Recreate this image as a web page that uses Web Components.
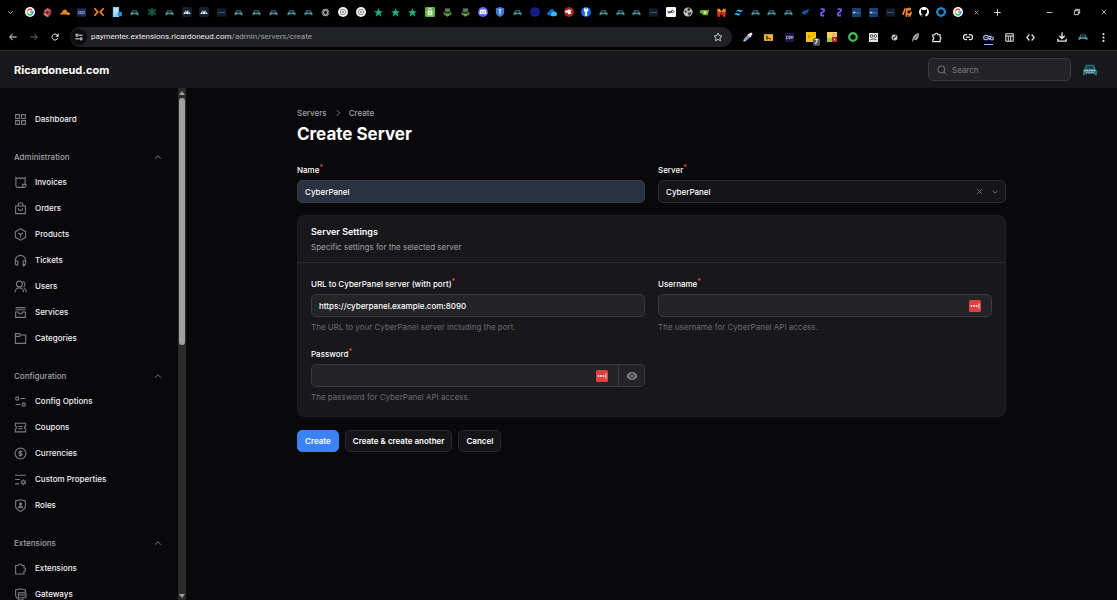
<!DOCTYPE html>
<html lang="en">
<head>
<meta charset="utf-8">
<meta name="viewport" content="width=device-width, initial-scale=1">
<title>Create Server - Ricardoneud.com</title>
<style>
  :root {
    --page: #09090b; --panel: #18181b; --line: #27272a;
    --text: #f4f4f5; --soft: #a1a1aa; --faint: #7c7c85; --danger: #f0524f; --accent: #3b82f6;
  }
  body { margin: 0; background: var(--page); color: var(--text);
    font: 500 8px/12px Inter, "Liberation Sans", sans-serif; }
</style>
</head>
<body>
<browser-window></browser-window>

<script>
const line = (d, w = 2) => `<g fill="none" stroke="currentColor" stroke-width="${w}">${d}</g>`;
const p = d => `<path d="${d}"/>`;
const G = '<circle cx="12" cy="12" r="12" fill="#fff"/><g fill="none" stroke-width="3.6"><path d="M17 7.2A7 7 0 0 0 6 8.6" stroke="#ea4335"/><path d="M6 8.6a7 7 0 0 0 0 6.8" stroke="#fbbc05"/><path d="M6 15.4a7 7 0 0 0 10.6 2" stroke="#34a853"/><path d="M16.4 17.4A7 7 0 0 0 19 12h-7" stroke="#4285f4"/></g>';
const ICONS = {
  // navigation
  dashboard: line(p('M3 3h7v7H3zM14 3h7v7h-7zM3 14h7v7H3zM14 14h7v7h-7z')),
  bill: line(p('M3.5 18V3l3 2 2.800-2L12 5l2.700-2 2.800 2 3-2v12.500H22V18a3 3 0 0 1-3 3H6.500a3 3 0 0 1-3-3zM19 21a3 3 0 0 1-3-3v-2.500h5')),
  bag: line(p('M3 7.500h18v14H3zM7.500 7.500V6a4.500 4.500 0 0 1 9 0v1.500M8 11.500a4 4 0 0 0 8 0')),
  box: line(p('M12 1.500l9.500 5.300v10.400L12 22.500l-9.500-5.300V6.800zM7.500 9.300L12 12l4.500-2.700M12 12v6')),
  headset: line(p('M2.500 13v-1a9.500 9.500 0 0 1 19 0v5a5 5 0 0 1-5.500 5M2.500 13H7v7H4.500a2 2 0 0 1-2-2zM21.500 13H17v7h2.500a2 2 0 0 0 2-2z')),
  users: line('<circle cx="10" cy="7.500" r="5.500"/>' + p('M2 22.500a8 8 0 0 1 16 0M16.500 2.800a5.500 5.500 0 0 1 1 10M18.500 14.500a8.500 8.500 0 0 1 4 8')),
  archive: line(p('M3 3h18M3 7h18M3 11h5.500a3.500 3.500 0 0 0 7 0H21v10H3z')),
  folder: line(p('M2.500 21V3h7.500l2 2.500h9.500V21zM2.500 8h8l2-2')),
  sliders: line('<circle cx="6" cy="6.500" r="3"/><circle cx="18" cy="17.500" r="3"/>' + p('M12 6.500h9M3 17.500h9')),
  coupon: line(p('M2.500 4h19v5a3.200 3.200 0 0 0 0 6v5h-19v-5a3.200 3.200 0 0 0 0-6zM8 10h8M8 14.200h8')),
  coin: line('<circle cx="12" cy="12" r="10"/>' + p('M15.500 8.500H10.500a1.800 1.800 0 0 0 0 3.500h3a1.800 1.800 0 0 1 0 3.500H8.500M12 6v12')),
  props: line(p('M2 4h20M2 12h9M2 20h7M17.500 12v2M17.500 20v2.500M13 14.500l1.900 1M20 18.700l2 1M22 14.500l-2 1M15 18.700l-2 1') + '<circle cx="17.500" cy="17.200" r="3"/>'),
  shield: line(p('M3 3.500l9-2 9 2V14c0 4-4 6.500-9 9-5-2.500-9-5-9-9z') + '<circle cx="12" cy="9" r="1.800" fill="currentColor"/>' + p('M8 16a4.200 4.200 0 0 1 8 0z')),
  puzzle: line(p('M3 6.500h4.700a3.500 3.500 0 0 1 6.900 0H18.500v4.500a3 3 0 0 1 0 6V22H3z')),
  gateway: line(p('M21 7.500V3.500l-9-2-9 2V14c0 4 4 6.500 9 9 2-1 4-2 5.500-3.500') + '<rect x="8" y="9" width="14" height="9" rx="1"/>' + p('M8 13h14')),
  up: line(p('M5 16l7-7 7 7'), 2.400), down: line(p('M4.500 8l7.500 7.500L19.500 8'), 2.800), right: line(p('M8 3l9 9-9 9'), 2.600),
  cross: line(p('M3 3l18 18M21 3L3 21'), 3), plus: line(p('M12 1v22M1 12h22'), 3.200),
  search: line('<circle cx="10.500" cy="10.500" r="8.500"/>' + p('M16.500 16.500l6 6'), 2.200),
  eye: '<path fill="currentColor" fill-rule="evenodd" d="M12 4C6.500 4 2.500 7.500 1 12c1.500 4.500 5.500 8 11 8s9.500-3.500 11-8c-1.500-4.500-5.500-8-11-8zm0 3.200a4.800 4.800 0 1 1 0 9.600 4.800 4.800 0 0 1 0-9.600z"/><circle cx="12" cy="12" r="2.800" fill="currentColor"/>',
  pass: '<rect width="24" height="24" rx="3" fill="#e0403d"/><g fill="#fff"><circle cx="5" cy="12" r="1.800"/><circle cx="10" cy="12" r="1.800"/><circle cx="15" cy="12" r="1.800"/><path d="M19 7h1.800v10H19z"/></g>',
  // browser controls
  back: line(p('M23 12H3M11 2.500L2 12l9 9.500'), 3), forward: line(p('M1 12h20M13 2.500l9 9.500-9 9.500'), 3),
  reload: line(p('M20.500 15a9 9 0 1 1-1.500-8.500L21 9'), 3) + '<path fill="currentColor" d="M23 1v10H13z"/>',
  tune: line('<circle cx="6" cy="6.500" r="3.500"/><circle cx="18" cy="17.500" r="3.500"/>' + p('M12 6.500h11M1 17.500h11'), 3),
  starline: line(p('M12 2.500l2.900 6.300 6.800.8-5 4.700 1.300 6.800-6-3.400-6 3.400 1.300-6.800-5-4.700 6.800-.8z'), 2.400),
  minimize: line(p('M2 12h20'), 2.800), restore: line(p('M4 8h12v12H4zM8 8V4h12v12h-4'), 2.500),
  link: line(p('M10 6H7a6 6 0 0 0 0 12h3M14 6h3a6 6 0 0 1 0 12h-3M7 12h10'), 3),
  key: line('<circle cx="6.500" cy="12" r="5"/>' + p('M11.500 9.500h7M11.500 14.500h3.500v3'), 2.500) + '<circle cx="6.500" cy="12" r="1.700" fill="currentColor"/>' + line('<circle cx="19.500" cy="14" r="3.200"/>', 2.500),
  layout: line(p('M2 2h20v20H2zM2 8h20M8.700 8v14M15.300 8v14'), 2.600),
  code: line(p('M9 4l-7 8 7 8M15 4l7 8-7 8'), 3.200),
  download: line(p('M12 1v14M5.500 9L12 15.500 18.500 9M2 16v6h20v-6'), 3.200),
  dots: '<g fill="currentColor"><circle cx="12" cy="3" r="2.700"/><circle cx="12" cy="12" r="2.700"/><circle cx="12" cy="21" r="2.700"/></g>',
  pieces: line(p('M4 6h4.500a3.300 3.300 0 0 1 6.600 0H20v5a2.800 2.800 0 0 1 0 5v5H4v-4.500a3.200 3.200 0 0 0 0-6z'), 2.600),
  pipette: '<path fill="#e8eaed" d="M15 5l1-2 4-2 3 3-2 4-2 1 1 2-2 2-7-7 2-2z"/><path fill="#5a86e8" stroke="#e8eaed" stroke-width="2" d="M12 8l4 4L6 21l-4 1 1-4z"/>',
  yellowcar: '<path fill="#f3b52f" d="M0 3h24v18H0z"/><path fill="#3b3215" d="M4 7h5l1 4 9 4v2h-3l-3-2h-3l-1 2H5l2-5z"/>',
  purpletile: '<path fill="#1f1547" d="M0 0h24v24H0z"/>' + line(p('M8 9H4v6h4M10.500 9h3.500v6h-3.500zM17 15V9l2 2 2-2v6'), 1.700),
  sevenbox: '<path fill="#f4c20d" d="M0 0h24v24H0z"/><path fill="#d19a00" d="M5 7h5v7H5z"/>',
  colors: '<path fill="#f4d35e" d="M0 0h24v24H0z"/><path fill="#f0b070" d="M12 3h11v9H12z"/><path fill="#a5c52a" d="M0 14h12v10H0z"/><path fill="#b3222a" d="M12 12h12v12H12z"/><path stroke="#fff" stroke-width="2" d="M16 16l4 4m0-4l-4 4"/>',
  ring: '<circle cx="12" cy="12" r="9" fill="none" stroke="#43b85a" stroke-width="5.500"/>',
  owl: '<path fill="#e4e4e4" d="M0 0h24v24H0z"/><g fill="none" stroke="#222" stroke-width="2"><circle cx="7" cy="8" r="3.500"/><circle cx="17" cy="8" r="3.500"/><path d="M4 18q8-5 16 0"/></g>',
  swirl: '<circle cx="12" cy="12" r="8" fill="#c9c9c9"/><path d="M9 17q-3-6 3-6t3-5" fill="none" stroke="#000" stroke-width="2.400"/>',
  feather: '<path fill="#a9a9a9" d="M3 23C3 13 8 2 21 0q1 14-7 19l-5-1z"/><path d="M4 23L17 6" stroke="#333" stroke-width="2"/>',
  // favicons
  google: G,
  hexa: '<path fill="#8b2c62" d="M12 0l10 6v12l-10 6L2 18V6z"/><path fill="#e0564c" d="M12 0l10 6-4 3-6-3-8 5V6z"/><path fill="#e9853b" d="M2 13l10 5 5 3-5 3-10-6z"/><circle cx="12" cy="12" r="4.500" fill="#2a1030" stroke="#ef8e78" stroke-width="1.800"/>',
  flare: '<path fill="#f38020" d="M0 18q0-5 5-5 1-7 7-7 6 1 6 7 6 0 6 5z"/><path fill="#faae40" d="M16 18l2-5q6 0 6 5z"/>',
  navy: '<path fill="#1c2b5e" d="M0 1h24v22H0z"/><path stroke="#aab3d1" stroke-width="2.800" stroke-dasharray="4 1" d="M3 10h18M3 14h18"/>',
  angles: '<path d="M1 3l8 9-8 9M23 3l-8 9 8 9" fill="none" stroke="#ff8a1f" stroke-width="4"/>',
  doc: '<path fill="#8ecdf0" d="M2 0h15v24H2z"/><path stroke="#fff" stroke-width="2" d="M5 5h9M5 10h9M5 15h6"/><circle cx="19" cy="17" r="5.500" fill="#2b91cf"/>',
  car: '<path fill="#3f727c" d="M6 6h12l3 6 2 2v5h-4v-2H5v2H1v-5l2-2z"/><path fill="#12282d" d="M8 8h8l2 4H6z"/><path fill="#8bb8bf" d="M3 14h5v2H3zM16 14h5v2h-5z"/>',
  avatar: '<path fill="#2e727c" d="M5 3h14l3 8 2 2v8h-4v-3H4v3H0v-8l2-2z"/><path fill="#203c44" d="M7 5h10l2 5H5z"/><path stroke="#a5d7df" stroke-width="2.600" stroke-dasharray="3 1" d="M2 13h20"/><path stroke="#d4e4e5" stroke-width="1.500" stroke-dasharray="2 1" d="M5 17h14"/>',
  flower: '<g stroke="#0d5248" stroke-width="3.500" fill="none"><path d="M12 1v22M2 6l20 12M2 18L22 6"/><circle cx="12" cy="12" r="7" stroke-width="2.400"/></g>',
  peak: '<rect width="24" height="24" rx="5" fill="#152033"/><path fill="#fff" d="M3 17l6-9 3 4 2-5 7 10z"/><path stroke="#152033" stroke-width="1.500" d="M9 9v8M14 8l3 9"/>',
  dark: '<path fill="#111f2d" d="M0 1h24v22H0z"/><path stroke="#70808d" stroke-width="2" stroke-dasharray="3 1" d="M3 12h18"/>',
  knot: '<g fill="none" stroke="#b3b3b3" stroke-width="2.200"><ellipse cx="12" cy="12" rx="10" ry="5"/><ellipse cx="12" cy="12" rx="10" ry="5" transform="rotate(60 12 12)"/><ellipse cx="12" cy="12" rx="10" ry="5" transform="rotate(120 12 12)"/></g>',
  badge: '<circle cx="12" cy="12" r="12" fill="#eee"/><circle cx="12" cy="12" r="6.500" fill="none" stroke="#888" stroke-width="2.200"/><circle cx="12" cy="12" r="2.500" fill="#888"/>',
  star: '<path fill="#13b981" d="M12 0l3 8.500h9l-7 5.500 2.600 9L12 17.500 4.400 23 7 14 0 8.500h9z"/>',
  shop: '<rect width="24" height="24" rx="3" fill="#62b33f"/><path fill="#dff3d2" d="M6 9h12v11H6z"/><path d="M9 9V6a3 3 0 0 1 6 0v3" fill="none" stroke="#fff" stroke-width="2"/><path stroke="#62b33f" stroke-width="2" d="M12 12v5"/>',
  hat: '<path fill="#6a6f69" d="M5 1h14v11H5z"/><path fill="#62a93a" d="M0 12h24l-3 5-9 6-9-6z"/><path fill="#293128" d="M4 10h16v5H4z"/>',
  chat: '<circle cx="12" cy="12" r="12" fill="#5865f2"/><path fill="#fff" d="M6 6h12l3 10-5 2-1-2H9l-1 2-5-2z"/><circle cx="9" cy="12" r="1.600" fill="#5865f2"/><circle cx="15" cy="12" r="1.600" fill="#5865f2"/>',
  guard: '<path fill="#3c78d8" d="M12 0l10 3v9q0 8-10 12Q2 20 2 12V3z"/><path d="M12 18V9m0 0q-4-3 0-4 4 1 0 4" fill="none" stroke="#fff" stroke-width="2.200"/>',
  orb: '<circle cx="12" cy="12" r="11.500" fill="#172092"/><g fill="#0a0e50"><circle cx="8" cy="9" r="2"/><circle cx="16" cy="9" r="2"/><path d="M6 17q6-7 12 0z"/></g>',
  drive: '<path fill="#0f6bc6" d="M0 17q0-6 5-6 2-8 9-6l4 5-7 10H4q-4 0-4-3z"/><path fill="#36bdf8" d="M9 20q0-8 7-9 8 0 8 7-1 4-5 4h-7q-3 0-3-2z"/>',
  red: '<circle cx="12" cy="12" r="12" fill="#a9202a"/><path fill="#fff" d="M3 9l10-3 6 3-5 2 5 4-8 3-3-5-5 1z"/>',
  blue: '<circle cx="12" cy="12" r="12" fill="#1769e0"/><path fill="#fff" d="M7 3h3l2 3 2-3h3v6l-3 4 1 8H9l1-8-3-4z"/>',
  white: '<rect width="24" height="24" rx="3" fill="#fff"/><path d="M4 9l3 6 3-5 2 4 3-7 4 4-4 4" fill="none" stroke="#222" stroke-width="2.300"/>',
  globe: '<circle cx="12" cy="12" r="11" fill="#bfc2c5"/><path fill="#333" d="M3 8q6-1 7 4l-4 2zM12 2l7 3-5 5-4-3zM12 14l7-2 1 4-6 6z"/>',
  cup: '<path fill="#70a82e" d="M3 5h21l-3 14H8l-2-4-6-2V7z"/><path fill="#dff0b9" d="M10 9h7v6h-7z"/>',
  em: '<path fill="#f59a16" d="M1 2h6l5 7 5-7h6v9H1z"/><path fill="#e12d21" d="M1 10h7l4 4 4-4h7v13h-7v-7l-4 3-4-3v7H1z"/>',
  wind: '<path fill="#38bdf8" d="M6 10q3-8 9-5 3 3 9-1-3 9-9 6-4-3-9 0zM0 19q3-8 9-5 3 3 9-1-3 9-9 6-4-3-9 0z"/>',
  bird: '<path fill="#1559a8" d="M1 17Q3 6 12 7l4-4 8 1-7 5 5 3-9 2 1 6-5-4z"/>',
  ess: '<path d="M7 3h8q4 5-3 8-7 4-3 9h7" fill="none" stroke="#6a5bea" stroke-width="5"/>',
  tile: '<path fill="#193e70" d="M0 0h24v24H0z"/><path fill="#c7d8ec" d="M3 10h6v4H3z"/><path stroke="#7795b7" stroke-width="2" d="M11 13h10"/>',
  stripes: '<path fill="#f0843a" d="M0 17L6 3h4L4 20zM8 22l2-19h5l-2 12h6l3-6 2 6-4 8-6 1 2-5h-3l-2 6z"/><circle cx="18" cy="5" r="4" fill="#f0843a"/>',
  octo: '<circle cx="12" cy="12" r="12" fill="#fff"/><path fill="#050505" d="M5 5l4 2h6l4-2v5q2 6-4 7l1 7H8v-3q-4 1-5-3 3 1 5 0l1-1q-6-1-4-7z"/>',
  hexblue: '<path d="M12 2.500l7 3 3 6.500-4 7-6 2.500-6-2.500-4-7 3-6.500z" fill="none" stroke="#2185d0" stroke-width="5"/>'
};

/* Base class: renders a shadow root from the styles and markup of the subclass. */
class Part extends HTMLElement {
  connectedCallback() {
    if (this.shadowRoot) return;
    const t = document.createElement('template');
    t.innerHTML = `<style>*{box-sizing:border-box}a{color:inherit;text-decoration:none}
      button,input,select{font:inherit;color:inherit;margin:0;padding:0;border:0;background:none;outline:0}
      :host{display:block}${this.css()}</style>${this.html()}`;
    this.attachShadow({ mode: 'open' }).append(t.content.cloneNode(true));
  }
  attr(n, d = '') { return this.getAttribute(n) ?? d; }
  css() { return ''; }
  html() { return '<slot></slot>'; }
}
const icon = (n, s = 10) => `<ui-icon name="${n}" size="${s}"></ui-icon>`;

customElements.define('ui-icon', class extends Part {
  css() { const s = this.attr('size', '10'); return `:host{flex:none;width:${s}px;height:${s}px}svg{display:block;width:100%;height:100%}`; }
  html() { return `<svg viewBox="0 0 24 24" aria-hidden="true">${ICONS[this.attr('name')] || ''}</svg>`; }
});

/* The strip of pinned browser tabs with the window buttons. */
customElements.define('tab-strip', class extends Part {
  css() { return `:host{display:flex;height:24px;background:#000;color:#e8eaed}
    button{display:grid;place-items:center;height:24px}
    .menu{width:21px}.tabs{display:flex;min-width:0}.first{flex:4}.second{flex:3}
    .tabs span{flex:1;display:grid;place-items:center;min-width:0}
    .tail{display:flex;width:151px}.tail button{width:21px}
    .window{display:flex;margin-left:auto}.window button{width:27px}`; }
  html() {
    const cells = s => s.split(' ').map(n => `<span>${icon(n, /^(navy|dark|tile|star|hat|cup|ess|em|wind|bird|hexa|knot|car)$/.test(n) ? 9 : 10)}</span>`).join('');
    return `<button class="menu" aria-label="Search tabs">${icon('down', 7)}</button>
      <div class="tabs first">${cells('google hexa flare navy angles doc car flower car peak peak dark car car car car car knot badge badge star star star shop hat hat chat guard car orb drive')}</div>
      <div class="tabs second">${cells('red blue car car car dark white globe cup em wind car car car bird ess ess tile tile dark stripes octo hexblue google')}</div>
      <div class="tail"><button aria-label="Close tab">${icon('cross', 5)}</button><button aria-label="New tab">${icon('plus', 7)}</button>
      <div class="window"><button aria-label="Minimize">${icon('minimize', 7)}</button><button aria-label="Restore">${icon('restore', 8)}</button><button aria-label="Close">${icon('cross', 6)}</button></div></div>`;
  }
});

customElements.define('address-bar', class extends Part {
  css() { return `:host{display:flex;align-items:center;height:26px;padding:0 3px 0 2px;background:#000;color:#e8eaed}
    button{position:relative;flex:none;width:21px;height:21px;display:grid;place-items:center}
    .off{color:#6b6d70}
    .url{flex:1;display:flex;align-items:center;gap:4px;height:20px;margin:0 5px;padding:0 9px 0 1px;border-radius:10px;background:#202124;color:#9aa0a6;
      font:400 8px/12px Roboto,"Open Sans",sans-serif}
    .url b{font-weight:400;color:#e8eaed}.url a{flex:1}
    .url .info{width:16px;height:16px;border-radius:8px;background:#0b0c0d;color:#e8eaed}
    .url .fav{width:10px;color:#c4c7c5}
    .group{display:flex}.group+.group{margin-left:10px}
    .count{position:absolute;right:1px;bottom:2px;padding:0 2px;border-radius:2px;background:#54575b;color:#fff;font:700 6px/8px Inter,sans-serif}
    .on{color:#a8c0fa}
    .on::after{content:"";position:absolute;left:6px;right:6px;bottom:3px;height:1px;background:#a8c0fa}`; }
  html() {
    const b = (n, s, label, extra = '', cls = '') => `<button class="${cls}" aria-label="${label}">${icon(n, s)}${extra}</button>`;
    return `${b('back', 8, 'Back')}${b('forward', 8, 'Forward', '', 'off')}${b('reload', 8, 'Reload')}
      <div class="url">${b('tune', 8, 'Site information', '', 'info')}<a href="#"><b>paymenter.extensions.ricardoneud.com</b>/admin/servers/create</a>${b('starline', 10, 'Bookmark', '', 'fav')}</div>
      <div class="group">${b('pipette', 10, 'Colour picker')}${b('yellowcar', 9, 'Extension')}${b('purpletile', 9, 'Extension')}${b('sevenbox', 10, 'Extension', '<span class="count">7</span>')}${b('colors', 10, 'Extension')}${b('ring', 10, 'Extension')}${b('owl', 9, 'Extension')}${b('swirl', 9, 'Extension')}${b('feather', 9, 'Extension')}${b('pieces', 11, 'Extensions')}</div>
      <div class="group">${b('link', 10, 'Link')}${b('key', 11, 'Passwords', '', 'on')}${b('layout', 9, 'Layout')}${b('code', 9, 'Code')}</div>
      <div class="group">${b('download', 10, 'Downloads')}${b('car', 10, 'Profile')}${b('dots', 9, 'Menu')}</div>`;
  }
});

customElements.define('app-header', class extends Part {
  css() { return `:host{display:flex;align-items:center;justify-content:space-between;height:38px;padding:0 16px 0 14px;background:var(--panel);border-top:1px solid #303033}
    .brand{font-weight:700;font-size:11px;line-height:16px;color:#fff}
    .right{display:flex;align-items:center;gap:7px}
    label{display:flex;align-items:center;gap:5px;width:143px;height:23px;padding:0 8px;border:1px solid #3b3b3e;border-radius:5px;background:#242427;color:var(--faint)}
    input{min-width:0;flex:1;font-weight:400}input::placeholder{color:var(--faint);opacity:1}
    button{width:23px;height:23px;display:grid;place-items:center}`; }
  html() { return `<a class="brand" href="#">Ricardoneud.com</a><div class="right">
    <label>${icon('search', 10)}<input type="search" placeholder="Search" aria-label="Search"></label>
    <button aria-label="User menu">${icon('avatar', 14)}</button></div>`; }
});

customElements.define('nav-item', class extends Part {
  css() { return `a{display:flex;align-items:center;gap:8px;height:26px;color:#f0f0f2}ui-icon{color:var(--faint)}`; }
  html() { return `<a href="#">${icon(this.attr('icon'), 13)}<span><slot></slot></span></a>`; }
});

customElements.define('nav-group', class extends Part {
  css() { return `button{display:flex;align-items:center;justify-content:space-between;width:100%;height:25px;padding-right:1px;color:var(--soft);font-weight:500}ui-icon{color:var(--faint)}`; }
  html() { return `<button aria-expanded="true">${this.attr('label')}${icon('up', 10)}</button><slot></slot>`; }
});

customElements.define('side-bar', class extends Part {
  css() { return `:host{display:flex;width:186px;flex:none;min-height:0}
    nav{flex:1;min-width:0;overflow:hidden;padding:18px 14px;display:flex;flex-direction:column;gap:12px}nav>*{flex:none}
    .scroll{width:8px;display:flex;flex-direction:column;align-items:center;background:#2b2b2b;padding:3px 0 2px}
    .scroll i{width:0;border:3px solid transparent}
    .up{border-top-width:0!important;border-bottom:4px solid #9f9f9f!important}.down{border-bottom-width:0!important;border-top:4px solid #9f9f9f!important}
    .track{flex:1;width:6px;padding:3px 0}.thumb{height:50%;border-radius:3px;background:#9f9f9f}`; }
  html() {
    const item = ([i, t]) => `<nav-item icon="${i}">${t}</nav-item>`;
    const group = (l, items) => `<nav-group label="${l}">${items.map(item).join('')}</nav-group>`;
    return `<nav>${item(['dashboard', 'Dashboard'])}
      ${group('Administration', [['bill', 'Invoices'], ['bag', 'Orders'], ['box', 'Products'], ['headset', 'Tickets'], ['users', 'Users'], ['archive', 'Services'], ['folder', 'Categories']])}
      ${group('Configuration', [['sliders', 'Config Options'], ['coupon', 'Coupons'], ['coin', 'Currencies'], ['props', 'Custom Properties'], ['shield', 'Roles']])}
      ${group('Extensions', [['puzzle', 'Extensions'], ['gateway', 'Gateways']])}</nav>
      <div class="scroll"><i class="up"></i><div class="track"><div class="thumb"></div></div><i class="down"></i></div>`;
  }
});

/* A labelled control; things slotted in sit at the right end of its box. */
customElements.define('form-field', class extends Part {
  css() { return `label{display:block;height:12px;color:#fff}sup{color:var(--danger);font-size:7px;line-height:0;vertical-align:3px}
    .box{display:flex;align-items:center;height:23px;margin-top:4px;border:1px solid var(--field-ring,#3a3a3d);border-radius:5px;background:var(--field,#242427);color:#fff}
    input,select{flex:1;min-width:0;height:100%;padding:0 7px;appearance:none;border-radius:5px}
    :host([filled]) .box{background:#2a3140;border-color:#343a47}
    p{margin:4px 0 0;font-weight:400;color:#6b6b73}`; }
  html() {
    const v = this.attr('value'), type = this.attr('type', 'text');
    const control = type === 'select' ? `<select id="control" required><option selected>${v}</option></select>` : `<input id="control" type="${type}" value="${v}" required>`;
    const hint = this.attr('hint');
    return `<label for="control">${this.attr('label')}<sup>*</sup></label><div class="box">${control}<slot></slot></div>${hint ? `<p>${hint}</p>` : ''}`;
  }
});

customElements.define('field-grid', class extends Part {
  css() { return ':host{display:grid;grid-template-columns:repeat(2,minmax(0,1fr));gap:15px 13px}'; }
});

customElements.define('field-button', class extends Part {
  css() { return `:host{display:flex;align-self:stretch;color:var(--faint)}button{display:grid;place-items:center;width:15px}
    :host([boxed]){border-left:1px solid #3a3a3d}:host([boxed]) button{width:25px}`; }
  html() { return `<button type="button" aria-label="${this.attr('label')}">${icon(this.attr('icon'), this.attr('size', '8'))}</button>`; }
});

customElements.define('form-section', class extends Part {
  css() { return `section{border-radius:8px;background:var(--panel);box-shadow:inset 0 0 0 1px #1e1e21}
    header{padding:10px 14px 9px;border-bottom:1px solid #29292c}
    h2{margin:0 0 2px;font-size:9px;line-height:14px;font-weight:600;color:#fff}
    p{margin:0;font-weight:400;color:var(--soft)}.body{padding:15px 14px 14px}`; }
  html() { return `<section><header><h2>${this.attr('heading')}</h2><p>${this.attr('description')}</p></header><div class="body"><slot></slot></div></section>`; }
});

customElements.define('action-button', class extends Part {
  css() { return `button{height:22px;padding:0 7px;border-radius:5px;border:1px solid #29292c;background:#151517;color:#fff;font-weight:600;white-space:nowrap}
    :host([primary]) button{background:var(--accent);border-color:var(--accent)}`; }
  html() { return '<button type="button"><slot></slot></button>'; }
});

customElements.define('create-page', class extends Part {
  css() { return `:host{flex:1;min-width:0;padding:19px 14px}
    .wrap{max-width:709px;margin:0 auto}
    .crumbs{display:flex;align-items:center;gap:7px;color:var(--soft)}.crumbs ui-icon{color:var(--faint)}
    h1{margin:5px 0 20px;font-size:17px;line-height:20px;font-weight:700;color:#fff}
    form{display:flex;flex-direction:column;gap:12px}
    .outer{--field:#151517;--field-ring:#2d2d30}
    .actions{display:flex;align-items:center;gap:6px;height:24px}
    .gap{margin-right:10px}.last{margin-right:3px}`; }
  html() { return `<div class="wrap"><nav class="crumbs" aria-label="Breadcrumb"><a href="#">Servers</a>${icon('right', 8)}<a href="#">Create</a></nav>
    <h1>Create Server</h1>
    <form>
      <field-grid class="outer">
        <form-field label="Name" value="CyberPanel" filled></form-field>
        <form-field label="Server" value="CyberPanel" type="select"><field-button label="Clear" icon="cross" size="7"></field-button><field-button class="last" label="Open" icon="down" size="8"></field-button></form-field>
      </field-grid>
      <form-section heading="Server Settings" description="Specific settings for the selected server">
        <field-grid>
          <form-field label="URL to CyberPanel server (with port)" value="https://cyberpanel.example.com:8090" hint="The URL to your CyberPanel server including the port."></form-field>
          <form-field label="Username" hint="The username for CyberPanel API access."><ui-icon class="gap" name="pass" size="12"></ui-icon></form-field>
          <form-field label="Password" type="password" hint="The password for CyberPanel API access."><ui-icon class="gap" name="pass" size="12"></ui-icon><field-button boxed label="Show password" icon="eye" size="12"></field-button></form-field>
        </field-grid>
      </form-section>
      <div class="actions"><action-button primary>Create</action-button><action-button>Create &amp; create another</action-button><action-button>Cancel</action-button></div>
    </form></div>`; }
});

customElements.define('browser-window', class extends Part {
  css() { return `:host{display:flex;flex-direction:column;height:100vh;overflow:hidden}
    tab-strip,address-bar,app-header{flex:none}
    main{flex:1;display:flex;min-height:0}`; }
  html() { return `<tab-strip></tab-strip><address-bar></address-bar><app-header></app-header>
    <main><side-bar></side-bar><create-page></create-page></main>`; }
});
</script>
</body>
</html>
